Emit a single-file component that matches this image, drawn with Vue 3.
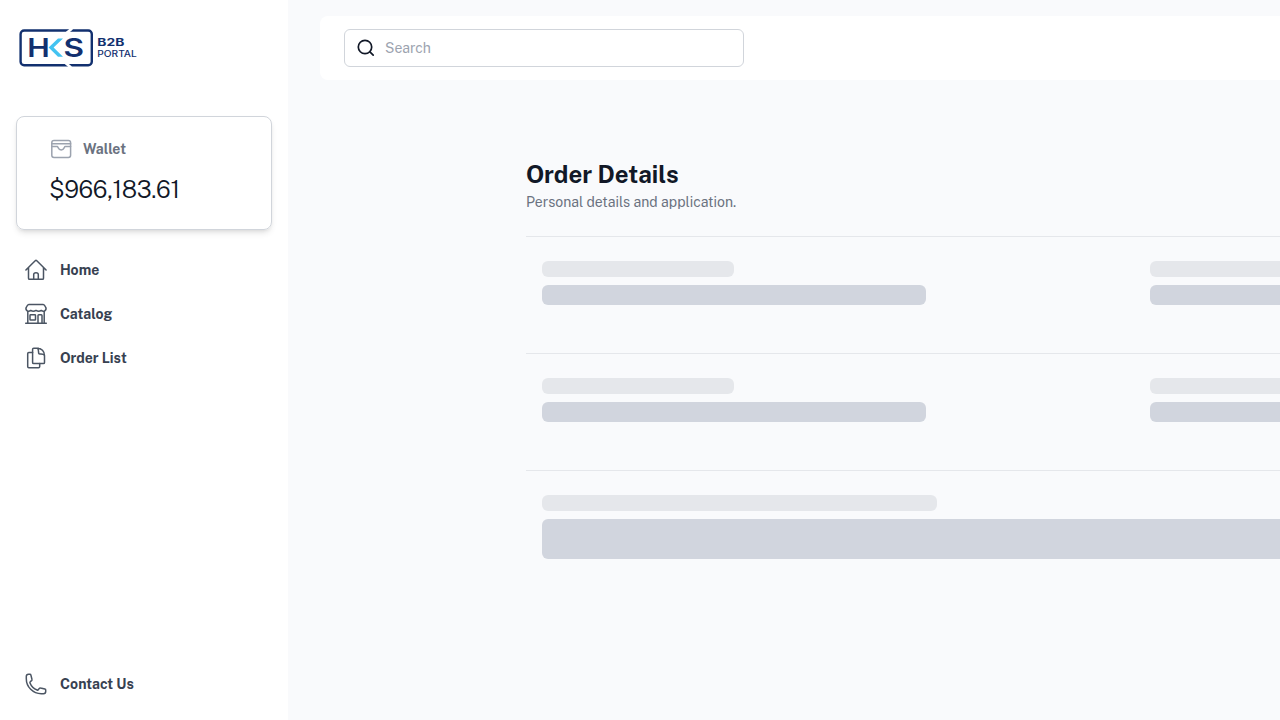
<script setup>
const links = [
  { label: 'Home', icon: 'home' },
  { label: 'Catalog', icon: 'store' },
  { label: 'Order List', icon: 'docs' },
]
</script>

<template>
  <div class="page">
    <aside class="sidebar">
      <svg class="logo" viewBox="0 0 124 44" aria-label="HKS B2B Portal">
        <rect x="4.600" y="4.500" width="71.200" height="34.800" rx="3.500" fill="none" stroke="#12306f" stroke-width="2.400" />
        <path d="M50 7.500L56 2.500M49 36.500L55 41.500" stroke="#fff" stroke-width="2.800" />
        <text class="mark" x="11.200" y="30.800" textLength="22.500" lengthAdjust="spacingAndGlyphs">H</text>
        <path d="M32.600 21.600L42 12.400H47L37.600 21.600L47 30.800H42Z" fill="#43c3f1" />
        <text class="mark" x="47.600" y="30.800" textLength="20.500" lengthAdjust="spacingAndGlyphs">S</text>
        <text class="tag" x="81.300" y="20.300" textLength="27" lengthAdjust="spacingAndGlyphs">B2B</text>
        <text class="tag small" x="81.300" y="30.900" textLength="39.500" lengthAdjust="spacingAndGlyphs">PORTAL</text>
      </svg>

      <section class="wallet">
        <div class="wallet-head">
          <svg class="icon pale" viewBox="0 0 24 24">
            <rect x="2.800" y="3.500" width="18.800" height="17" rx="2.200" />
            <path d="M2.800 6.800H21.600M2.800 9.600H8.200C9.300 9.600 9 12.900 12.200 12.900S15.100 9.600 16.200 9.600H21.600" />
          </svg>
          <span class="wallet-label">Wallet</span>
        </div>
        <div class="amount">$966,183.61</div>
      </section>

      <nav>
        <a v-for="l in links" :key="l.label" class="link">
          <svg v-if="l.icon === 'home'" class="icon" viewBox="0 0 24 24">
            <path d="M1.900 12L11.200 2.700Q12 2 12.800 2.700L22.100 12M4.500 9.800V20.200Q4.500 21.300 5.600 21.300H18.400Q19.500 21.300 19.500 20.200V9.800M9.700 21.300V16.600Q9.700 14.800 12 14.800T14.300 16.600V21.300" />
          </svg>
          <svg v-else-if="l.icon === 'store'" class="icon" viewBox="0 0 24 24">
            <path d="M4.800 2.600H19.200Q20.300 2.600 21.500 4.800C23.300 7.800 19.900 10.700 17.300 8.400Q14.700 10.300 12 8.400Q9.300 10.300 6.700 8.400C4.100 10.700 .7 7.800 2.500 4.800Q3.700 2.600 4.800 2.600ZM3.800 9.300V21.300M20.200 9.300V21.300M1.700 21.300H22.300" />
            <rect x="6" y="12.800" width="5.500" height="5.200" rx=".6" />
            <path d="M14 21.300V13.600Q14 12.800 14.800 12.800H17.200Q18 12.800 18 13.600V21.300" />
          </svg>
          <svg v-else class="icon" viewBox="0 0 24 24">
            <path d="M15.700 17.500V20.600Q15.700 21.700 14.600 21.700H4.800Q3.700 21.700 3.700 20.600V7.700Q3.700 6.600 4.800 6.600H8.600" />
            <path d="M14.500 2.200H9.700Q8.600 2.200 8.600 3.300V16.400Q8.600 17.500 9.700 17.500H19.400Q20.500 17.500 20.500 16.400V9.500C20.500 5.400 17.500 2.200 13.300 2.200C14.900 3.200 14.400 6.100 14.700 7.200Q14.900 8 16 8C18 8.100 19.900 7.800 20.500 9.600" />
          </svg>
          <span>{{ l.label }}</span>
        </a>
      </nav>

      <a class="link contact">
        <svg class="icon" viewBox="0 0 24 24">
          <path d="M2.300 6.700C2.300 15 9 21.700 17.300 21.700H19.500Q21.700 21.700 21.700 19.500V18.100C21.700 17.600 21.400 17.200 20.900 17.100L16.500 16Q15.800 15.800 15.300 16.400L14.300 17.700C14 18.100 13.500 18.200 13.100 18C9.800 16.700 7.300 14.200 6 10.900C5.800 10.500 6 10 6.300 9.700L7.600 8.700Q8.200 8.200 8 7.500L6.900 3.100C6.800 2.600 6.400 2.300 5.900 2.300H4.500Q2.300 2.300 2.300 4.500Z" />
        </svg>
        <span>Contact Us</span>
      </a>
    </aside>

    <main>
      <header class="topbar">
        <div class="search">
          <svg class="glass" viewBox="0 0 20 20"><circle cx="9" cy="9" r="6.700" /><path d="M13.900 13.900L17.200 17.200" /></svg>
          <span>Search</span>
        </div>
      </header>
      <div class="details">
        <h1>Order Details</h1>
        <p>Personal details and application.</p>
        <div v-for="n in 2" :key="n" class="row">
          <div v-for="c in 2" :key="c" class="cell">
            <div class="bar title"></div>
            <div class="bar value"></div>
          </div>
        </div>
        <div class="row">
          <div class="cell">
            <div class="bar title wide"></div>
            <div class="bar block"></div>
          </div>
        </div>
      </div>
    </main>
  </div>
</template>

<style>
body { overflow: hidden; background: #f9fafc; }
</style>

<style scoped>
* { box-sizing: border-box; }
.page { display: flex; width: 100%; height: 720px; overflow: hidden; background: #f9fafc; font-family: "Public Sans", Inter, "Liberation Sans", sans-serif; color: #111827; }
.sidebar { display: flex; flex-direction: column; flex: none; width: 288px; height: 720px; padding: 26px 16px 14px; background: #fff; }
.logo { display: block; width: 124px; height: 44px; flex: none; }
.mark { font: 600 25px Inter, sans-serif; fill: #12306f; }
.tag { font: 700 10px Inter, sans-serif; fill: #12306f; }
.tag.small { font-size: 8.300px; font-weight: 500; }
.wallet { flex: none; height: 114px; margin-top: 46px; padding: 20px 33px; border: 1px solid #d1d5db; border-radius: 8px; box-shadow: 0 4px 6px -1px rgba(0,0,0,.1), 0 2px 4px -2px rgba(0,0,0,.1); }
.wallet-head { display: flex; align-items: center; gap: 10px; height: 24px; margin-left: -1px; }
.wallet-label { font-size: 14px; line-height: 20px; font-weight: 700; color: #6b7280; }
.amount { margin: 12px 0 0 -1px; font-size: 24px; line-height: 32px; font-weight: 300; letter-spacing: -.32px; }
.icon { display: block; width: 24px; height: 24px; flex: none; fill: none; stroke: #4b5563; stroke-width: 1.5; stroke-linecap: round; stroke-linejoin: round; }
.icon.pale { stroke: #9ca3af; }
nav { display: flex; flex-direction: column; gap: 4px; margin-top: 20px; }
.link { display: flex; align-items: center; gap: 12px; height: 40px; padding: 8px; font-size: 14px; line-height: 24px; font-weight: 700; color: #374151; }
.contact { margin-top: auto; margin-bottom: 2px; }
main { flex: 1; min-width: 0; padding: 16px 0 0 32px; }
.topbar { display: flex; align-items: center; height: 64px; padding-left: 24px; background: #fff; border-radius: 8px 0 0 8px; }
.search { display: flex; align-items: center; gap: 9px; width: 400px; height: 38px; padding-left: 11px; border: 1px solid #d1d5db; border-radius: 6px; font-size: 14px; color: #9ca3af; }
.glass { width: 20px; height: 20px; fill: none; stroke: #111827; stroke-width: 1.700; stroke-linecap: round; }
.details { width: 1216px; margin: 78px 0 0 206px; }
h1 { margin: 0; font-size: 24px; line-height: 32px; font-weight: 700; }
p { margin: 2px 0 24px; font-size: 14px; line-height: 20px; color: #6b7280; }
.row { display: flex; gap: 32px; height: 117px; padding: 24px 16px 0; border-top: 1px solid #e5e7eb; }
.cell { flex: 1; min-width: 0; }
.bar { border-radius: 6px; background: #d1d5de; }
.title { width: 192px; height: 16px; margin-bottom: 8px; background: #e5e7eb; }
.value { width: 384px; height: 20px; }
.wide { width: 395px; }
.block { height: 40px; }
</style>
